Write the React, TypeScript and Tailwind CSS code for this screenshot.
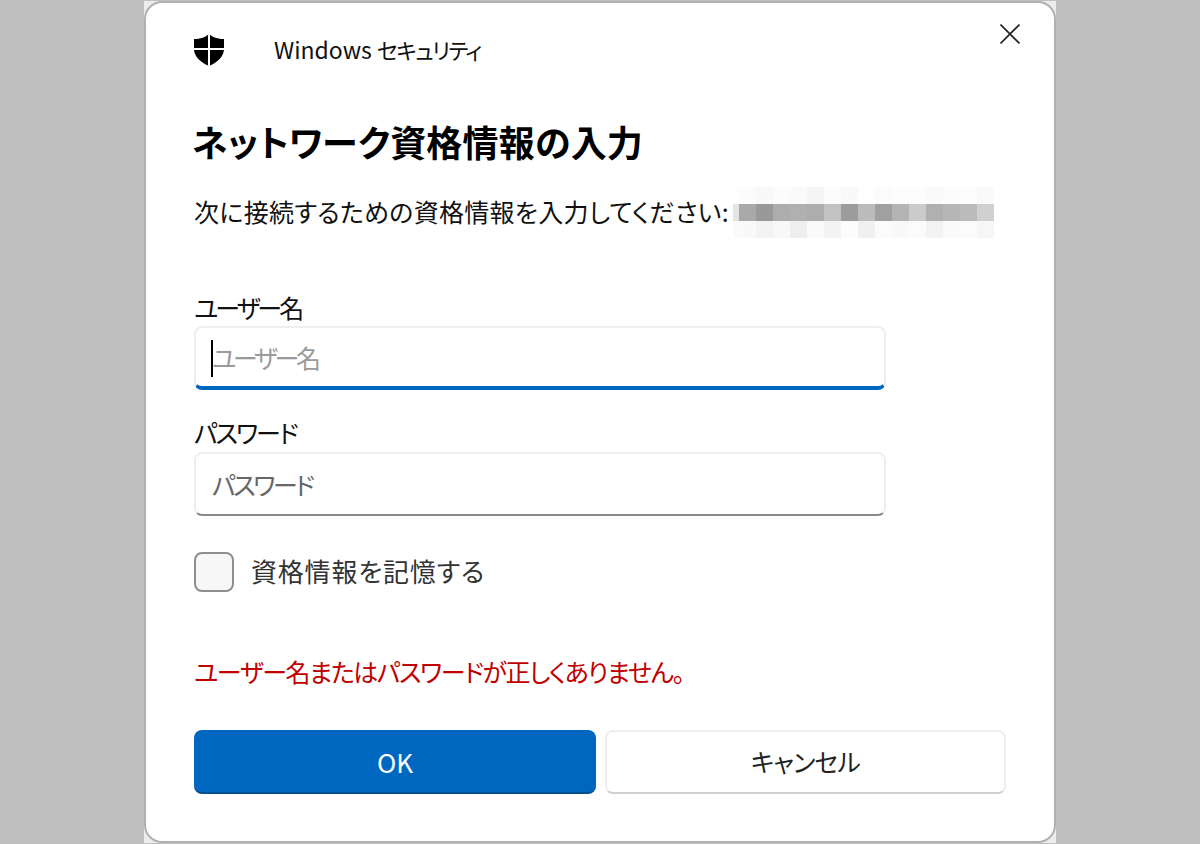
const blurRows = [
  ["#fefefe", "#fcfcfc", "#f9f9f9", "#fcfcfc", "#fafafa", "#f5f5f5", "#fcfcfc", "#f9f9f9", "#fefefe", "#fbfbfb", "#fdfdfd", "#fdfdfd", "#fafafa", "#fcfcfc", "#fdfdfd", "#fafafa"],
  ["#e4e4e4", "#a9a9a9", "#999999", "#adadad", "#b0b0b0", "#adadad", "#c2c2c2", "#9c9c9c", "#bbbbbb", "#a0a0a0", "#b4b4b4", "#cbcbcb", "#b0b0b0", "#b6b6b6", "#bbbbbb", "#d0d0d0"],
  ["#fafafa", "#f9f9f9", "#f3f3f3", "#f8f8f8", "#eeeeee", "#fafafa", "#f3f3f3", "#fcfcfc", "#f0f0f0", "#fbfbfb", "#f9f9f9", "#fbfbfb", "#f3f3f3", "#fafafa", "#fbfbfb", "#f6f6f6"],
];

function ShieldIcon() {
  return (
    <svg width="30" height="32" viewBox="0 0 30 32" className="mt-[2px]">
      <path d="M15 0 C12 3 6 5 0 5 V15 C0 22 6 28 15 32 C24 28 30 22 30 15 V5 C24 5 18 3 15 0 Z" fill="#000" />
      <path d="M14 0 H16 V32 H14 Z M0 14 H30 V16 H0 Z" fill="#fff" />
    </svg>
  );
}

function BlurredText() {
  return (
    <div className="grid grid-cols-[6px_repeat(15,17px)] grid-rows-[repeat(3,17px)] shrink-0">
      {blurRows.flat().map((c, i) => (
        <div key={i} style={{ backgroundColor: c }} />
      ))}
    </div>
  );
}

export default function App() {
  return (
    <div className="h-[844px] overflow-hidden bg-[#c0c0c0] flex justify-center pt-px font-['Noto_Sans_CJK_JP','Noto_Sans',sans-serif] [font-feature-settings:'palt']">
      <div className="w-[912px] h-[842px] bg-[#ececec]">
        <div className="h-full bg-white border-2 border-[#b0b0b0] rounded-[18px] relative pl-[48px] flex flex-col text-black whitespace-nowrap">
          <div className="flex items-center h-[92px] gap-[50px]">
            <ShieldIcon />
            <span className="text-[23px] leading-[30px] text-[#111]">
              Windows <span className="text-[22px] tracking-[-1.7px]">セキュリティ</span>
            </span>
          </div>
          <button className="absolute top-[21px] right-[34px] text-[#222]">
            <svg width="20" height="20" viewBox="0 0 20 20" stroke="currentColor" strokeWidth="1.6" className="block"><path d="M0.5 0.5 L19.5 19.5 M19.5 0.5 L0.5 19.5" /></svg>
          </button>
          <h1 className="text-[36px] font-bold leading-[50px] mt-[21px] -ml-[2px] tracking-[0.2px]">ネットワーク資格情報の入力</h1>
          <div className="flex items-center mt-[21px] text-[25px] text-[#111]">
            <span className="w-[539px] -mt-[2px] tracking-[0.3px]">次に接続するための資格情報を入力してください:</span>
            <BlurredText />
          </div>
          <label className="text-[25px] leading-[36px] mt-[51px] text-[#111] tracking-[-3px]">ユーザー名</label>
          <div className="w-[692px] h-[64px] mt-px border-2 border-[#eeeeee] border-b-[4px] border-b-[#0067c0] rounded-[8px] flex items-center pl-[15px] pt-[2px] text-[25px] text-[#9a9a9a] tracking-[-3.3px]">
            <span className="w-[2px] h-[37px] bg-black -mr-[1px]" />ユーザー名
          </div>
          <label className="text-[25px] leading-[36px] mt-[24px] text-[#111] tracking-[-2px]">パスワード</label>
          <div className="w-[692px] h-[64px] mt-[2px] border-2 border-[#eeeeee] border-b-[#8a8a8a] rounded-[8px] flex items-center pl-[16px] pt-[1px] text-[25px] text-[#666666] tracking-[-2.4px]">パスワード</div>
          <div className="flex items-center gap-[17px] mt-[36px]">
            <div className="w-[40px] h-[40px] rounded-[8px] border-2 border-[#8f8f8f] bg-[#f7f7f7]" />
            <span className="text-[26px] -mt-[4px] tracking-[0.8px] text-[#333333]">資格情報を記憶する</span>
          </div>
          <p className="text-[25px] leading-[36px] text-[#c00000] mt-[61px] tracking-[-1.4px]">ユーザー名またはパスワードが正しくありません。</p>
          <div className="flex gap-[9px] mt-[41px]">
            <button className="w-[402px] h-[64px] bg-[#0067c0] text-white text-[26px] rounded-[8px] border-b-2 border-[#00508f]">OK</button>
            <button className="w-[401px] h-[64px] bg-white text-[25px] text-[#222222] rounded-[8px] border-2 border-[#eeeeee] border-b-[#d0d0d0] tracking-[-0.8px]">キャンセル</button>
          </div>
        </div>
      </div>
    </div>
  );
}
